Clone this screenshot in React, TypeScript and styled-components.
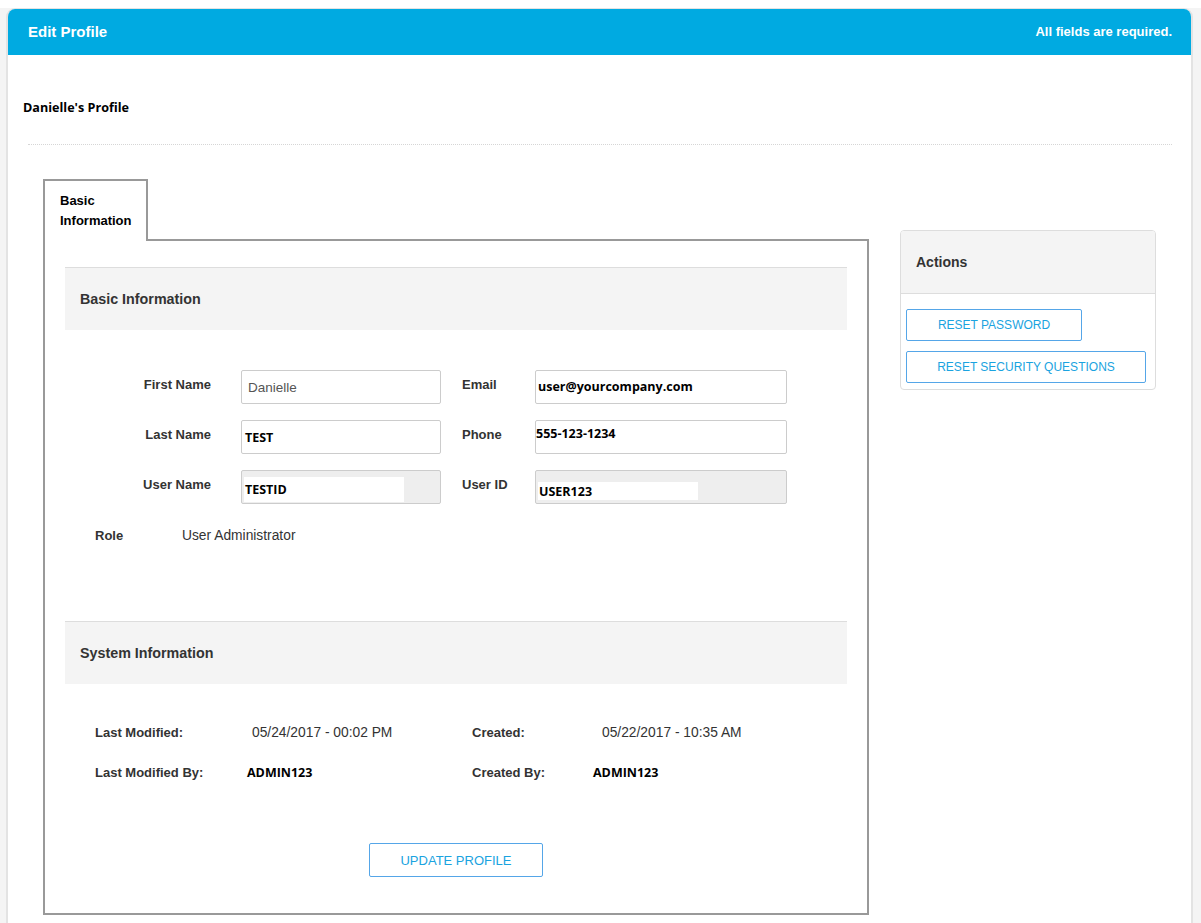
import React from 'react';
import styled, { createGlobalStyle } from 'styled-components';

const GlobalStyle = createGlobalStyle`
  html, body {
    margin: 0;
    padding: 0;
    background: #ffffff;
  }
  body {
    font-family: 'Liberation Sans', Arial, sans-serif;
    color: #333333;
  }
  * {
    box-sizing: border-box;
  }
`;

const Page = styled.div`
  margin-top: 8px;
  background: #f4f4f4;
  padding: 0 8px 0 6px;
  min-height: 915px;
`;

const Card = styled.div`
  background: #ffffff;
  border: 2px solid #e3e3e3;
  border-top-width: 1px;
  border-bottom: none;
  border-radius: 9px 9px 0 0;
  min-height: 915px;
  overflow: hidden;
`;

const Header = styled.div`
  height: 46px;
  background: #00aae1;
  color: #ffffff;
  display: flex;
  align-items: center;
  justify-content: space-between;
  padding: 0 19px 2px 20px;
`;

const HeaderTitle = styled.h1`
  margin: 0;
  font-size: 15px;
  font-weight: 700;
`;

const HeaderNote = styled.span`
  font-size: 13px;
  font-weight: 700;
`;

const ProfileTitle = styled.h2`
  margin: 0;
  padding: 45px 15px 0;
  font-family: 'Open Sans', 'Noto Sans', sans-serif;
  font-size: 12.6px;
  font-weight: 700;
  line-height: 16px;
  color: #000000;
`;

const Rule = styled.hr`
  margin: 28px 19px 0 20px;
  border: none;
  border-top: 1px dotted #d6d6d6;
  height: 0;
`;

const Body = styled.div`
  display: flex;
  align-items: flex-start;
  gap: 31px;
  padding: 34px 35px 0;
`;

const MainColumn = styled.div`
  width: 826px;
  display: flex;
  flex-direction: column;
  align-items: flex-start;
`;

const Tab = styled.div`
  position: relative;
  z-index: 1;
  width: 105px;
  margin-bottom: -2px;
  padding: 10px 15px 10px;
  background: #ffffff;
  border: 2px solid #999999;
  border-bottom: none;
  font-size: 13px;
  font-weight: 700;
  line-height: 20px;
  color: #000000;
`;

const TabPanel = styled.div`
  width: 100%;
  border: 2px solid #999999;
  padding: 26px 20px 36px;
  display: flex;
  flex-direction: column;
`;

const SectionHeader = styled.div`
  height: 63px;
  background: #f4f4f4;
  border-top: 1px solid #dddddd;
  display: flex;
  align-items: center;
  padding: 0 15px;
  font-size: 14.3px;
  font-weight: 700;
  color: #333333;
`;

const FormGrid = styled.div`
  display: grid;
  grid-template-columns: 176px 221px 73px 252px;
  row-gap: 16px;
  padding-top: 40px;
`;

const FieldLabel = styled.div<{ $align: 'left' | 'right' }>`
  padding-top: 7px;
  padding-right: ${(p) => (p.$align === 'right' ? '30px' : '0')};
  text-align: ${(p) => p.$align};
  font-size: 13px;
  font-weight: 700;
  line-height: 16px;
  color: #333333;
`;

const Field = styled.div<{ $width: number; $disabled?: boolean }>`
  width: ${(p) => p.$width}px;
  height: 34px;
  border: 1px solid #cccccc;
  border-radius: 2px;
  background: ${(p) => (p.$disabled ? '#eeeeee' : '#ffffff')};
  display: flex;
  align-items: center;
`;

const PlainValue = styled.span`
  padding-left: 6px;
  padding-top: 1px;
  font-size: 13.5px;
  color: #555555;
`;

const StrongValue = styled.span<{ $left: number; $top?: number }>`
  padding-left: ${(p) => p.$left}px;
  margin-top: ${(p) => p.$top ?? 0}px;
  font-family: 'Open Sans', 'Noto Sans', sans-serif;
  font-size: 12.5px;
  font-weight: 700;
  color: #000000;
`;

const LockedValue = styled.span<{ $left: number; $top: number; $height: number }>`
  width: 160px;
  height: ${(p) => p.$height}px;
  margin-left: ${(p) => p.$left}px;
  margin-top: ${(p) => p.$top}px;
  background: #ffffff;
  display: flex;
  align-items: center;
  padding-left: 1px;
  font-family: 'Open Sans', 'Noto Sans', sans-serif;
  font-size: 12.5px;
  font-weight: 700;
  color: #000000;
`;

const RoleRow = styled.div`
  display: flex;
  padding: 24px 0 0 30px;
  margin-bottom: 77px;
  font-size: 13px;
  line-height: 16px;
`;

const RoleLabel = styled.span`
  width: 87px;
  font-weight: 700;
`;

const RoleValue = styled.span`
  font-size: 13.8px;
  color: #333333;
`;

const InfoGrid = styled.div`
  display: flex;
  flex-direction: column;
  gap: 24px;
  padding: 41px 0 0 30px;
`;

const InfoRow = styled.div`
  display: flex;
  align-items: center;
  font-size: 13px;
  line-height: 16px;
`;

const InfoLabel = styled.span<{ $width: number }>`
  width: ${(p) => p.$width}px;
  font-weight: 700;
  color: #333333;
`;

const InfoValue = styled.span<{ $width?: number; $strong?: boolean }>`
  width: ${(p) => (p.$width ? `${p.$width}px` : 'auto')};
  font-family: ${(p) =>
    p.$strong ? "'Open Sans', 'Noto Sans', sans-serif" : "'Liberation Sans', Arial, sans-serif"};
  font-size: ${(p) => (p.$strong ? '12.5px' : '13.8px')};
  font-weight: ${(p) => (p.$strong ? 700 : 400)};
  color: ${(p) => (p.$strong ? '#000000' : '#333333')};
`;

const OutlineButton = styled.button<{ $width: number; $height: number; $size?: number }>`
  width: ${(p) => p.$width}px;
  height: ${(p) => p.$height}px;
  background: #ffffff;
  border: 1px solid #55a6e8;
  border-radius: 2px;
  color: #1aa3e0;
  font-family: 'Liberation Sans', Arial, sans-serif;
  font-size: ${(p) => p.$size ?? 12}px;
  text-transform: uppercase;
  cursor: pointer;
  padding: 0;
`;

const ButtonRow = styled.div`
  display: flex;
  justify-content: center;
  padding-top: 62px;
`;

const ActionsPanel = styled.div`
  width: 256px;
  margin-top: 51px;
  border: 1px solid #dddddd;
  border-radius: 4px;
  overflow: hidden;
`;

const ActionsHeader = styled.div`
  height: 63px;
  background: #f4f4f4;
  border-bottom: 1px solid #dddddd;
  display: flex;
  align-items: center;
  padding: 0 15px;
  font-size: 14px;
  font-weight: 700;
  color: #333333;
`;

const ActionsBody = styled.div`
  display: flex;
  flex-direction: column;
  align-items: flex-start;
  gap: 10px;
  padding: 15px 5px 6px;
`;

const App: React.FC = () => {
  return (
    <>
      <GlobalStyle />
      <Page>
        <Card>
          <Header>
            <HeaderTitle>Edit Profile</HeaderTitle>
            <HeaderNote>All fields are required.</HeaderNote>
          </Header>
          <ProfileTitle>Danielle's Profile</ProfileTitle>
          <Rule />
          <Body>
            <MainColumn>
              <Tab>
                Basic
                <br />
                Information
              </Tab>
              <TabPanel>
                <SectionHeader>Basic Information</SectionHeader>
                <FormGrid>
                  <FieldLabel $align="right">First Name</FieldLabel>
                  <Field $width={200}>
                    <PlainValue>Danielle</PlainValue>
                  </Field>
                  <FieldLabel $align="left">Email</FieldLabel>
                  <Field $width={252}>
                    <StrongValue $left={2} $top={-2}>user@yourcompany.com</StrongValue>
                  </Field>

                  <FieldLabel $align="right">Last Name</FieldLabel>
                  <Field $width={200}>
                    <StrongValue $left={3}>TEST</StrongValue>
                  </Field>
                  <FieldLabel $align="left">Phone</FieldLabel>
                  <Field $width={252}>
                    <StrongValue $left={0} $top={-8}>555-123-1234</StrongValue>
                  </Field>

                  <FieldLabel $align="right">User Name</FieldLabel>
                  <Field $width={200} $disabled>
                    <LockedValue $left={2} $top={4} $height={25}>TESTID</LockedValue>
                  </Field>
                  <FieldLabel $align="left">User ID</FieldLabel>
                  <Field $width={252} $disabled>
                    <LockedValue $left={2} $top={8} $height={18}>USER123</LockedValue>
                  </Field>
                </FormGrid>
                <RoleRow>
                  <RoleLabel>Role</RoleLabel>
                  <RoleValue>User Administrator</RoleValue>
                </RoleRow>

                <SectionHeader>System Information</SectionHeader>
                <InfoGrid>
                  <InfoRow>
                    <InfoLabel $width={157}>Last Modified:</InfoLabel>
                    <InfoValue $width={220}>05/24/2017 - 00:02 PM</InfoValue>
                    <InfoLabel $width={130}>Created:</InfoLabel>
                    <InfoValue>05/22/2017 - 10:35 AM</InfoValue>
                  </InfoRow>
                  <InfoRow>
                    <InfoLabel $width={152}>Last Modified By:</InfoLabel>
                    <InfoValue $width={225} $strong>
                      ADMIN123
                    </InfoValue>
                    <InfoLabel $width={121}>Created By:</InfoLabel>
                    <InfoValue $strong>ADMIN123</InfoValue>
                  </InfoRow>
                </InfoGrid>
                <ButtonRow>
                  <OutlineButton $width={174} $height={34} $size={13}>
                    Update Profile
                  </OutlineButton>
                </ButtonRow>
              </TabPanel>
            </MainColumn>

            <ActionsPanel>
              <ActionsHeader>Actions</ActionsHeader>
              <ActionsBody>
                <OutlineButton $width={176} $height={32}>
                  Reset Password
                </OutlineButton>
                <OutlineButton $width={240} $height={32}>
                  Reset Security Questions
                </OutlineButton>
              </ActionsBody>
            </ActionsPanel>
          </Body>
        </Card>
      </Page>
    </>
  );
};

export default App;
